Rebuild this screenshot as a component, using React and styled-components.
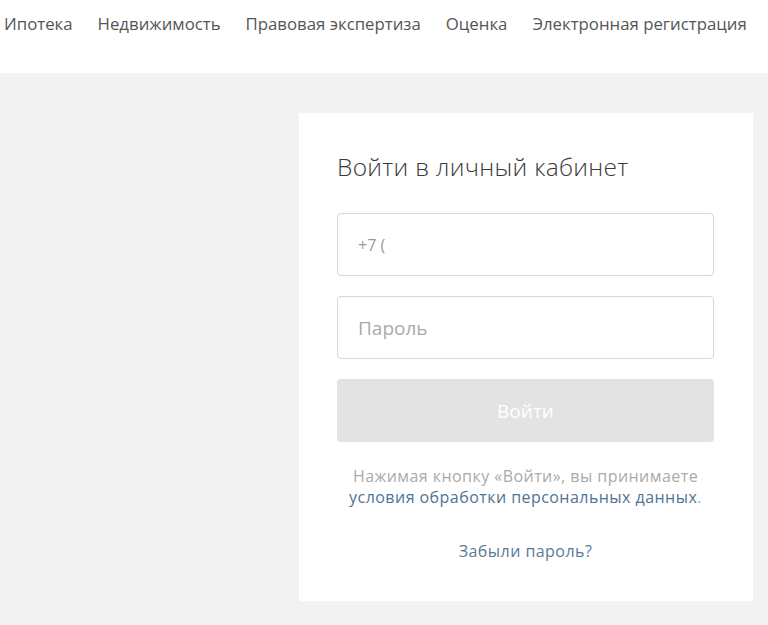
import React from "react";
import styled, { createGlobalStyle } from "styled-components";

const Global = createGlobalStyle`
  html, body { margin: 0; padding: 0; }
  body {
    background: #f2f2f2;
    font-family: "Open Sans", "Noto Sans", sans-serif;
    width: 768px;
    height: 625px;
    overflow: hidden;
  }
`;

const Header = styled.header`
  height: 73px;
  background: #fff;
  display: flex;
  align-items: flex-start;
`;

const Nav = styled.nav`
  display: flex;
  gap: 25px;
  padding: 12px 0 0 4px;
`;

const NavLink = styled.a`
  font-family: "Open Sans", sans-serif;
  font-size: 16.8px;
  color: #555;
  text-decoration: none;
  line-height: 24px;
  white-space: nowrap;
`;

const Main = styled.main`
  display: flex;
  padding: 40px 15px 0 299px;
`;

const Card = styled.section`
  width: 454px;
  height: 488px;
  box-sizing: border-box;
  background: #fff;
  padding: 36px 39px 0 38px;
  display: flex;
  flex-direction: column;
`;

const Title = styled.h1`
  margin: 0 0 28px;
  font-family: "Open Sans", sans-serif;
  font-weight: 300;
  font-size: 24.5px;
  letter-spacing: 0.3px;
  line-height: 36px;
  color: #3a3a3a;
`;

const Field = styled.input`
  box-sizing: border-box;
  width: 377px;
  height: 63px;
  border: 1px solid #d6d6d6;
  border-radius: 4px;
  padding: 0 20px;
  font-family: "Open Sans", sans-serif;
  font-size: ${(p) => p.$size || 17}px;
  color: #444;
  margin-bottom: 20px;
  outline: none;
  &::placeholder { color: ${(p) => p.$ph || "#aaa"}; }
`;

const Button = styled.button`
  box-sizing: border-box;
  width: 377px;
  height: 63px;
  border: none;
  border-radius: 4px;
  background: #e3e3e3;
  color: #fff;
  font-family: "Open Sans", sans-serif;
  font-size: 19px;
  margin-bottom: 24px;
`;

const Note = styled.p`
  margin: 0;
  text-align: center;
  font-family: "Open Sans", sans-serif;
  font-size: 16px;
  line-height: 21px;
  color: #aaa;
  letter-spacing: 0.45px;
`;

const Link = styled.a`
  color: ${(p) => p.$color || "#4f7396"};
  text-decoration: none;
`;

const Forgot = styled.div`
  margin-top: 33px;
  text-align: center;
  font-family: "Open Sans", sans-serif;
  font-size: 16px;
  letter-spacing: 0.45px;
  line-height: 21px;
`;

const items = ["Ипотека", "Недвижимость", "Правовая экспертиза", "Оценка", "Электронная регистрация"];

export default function App() {
  return (
    <>
      <Global />
      <Header>
        <Nav>
          {items.map((t) => (
            <NavLink key={t} href="#">{t}</NavLink>
          ))}
        </Nav>
      </Header>
      <Main>
        <Card>
          <Title>Войти в личный кабинет</Title>
          <Field placeholder="+7 (" $size={16} $ph="#999" />
          <Field placeholder="Пароль" $size={19} $ph="#aaa" />
          <Button>Войти</Button>
          <Note>
            Нажимая кнопку «Войти», вы принимаете
            <br />
            <Link href="#">условия обработки персональных данных</Link>.
          </Note>
          <Forgot>
            <Link href="#" $color="#5a7a95">Забыли пароль?</Link>
          </Forgot>
        </Card>
      </Main>
    </>
  );
}
